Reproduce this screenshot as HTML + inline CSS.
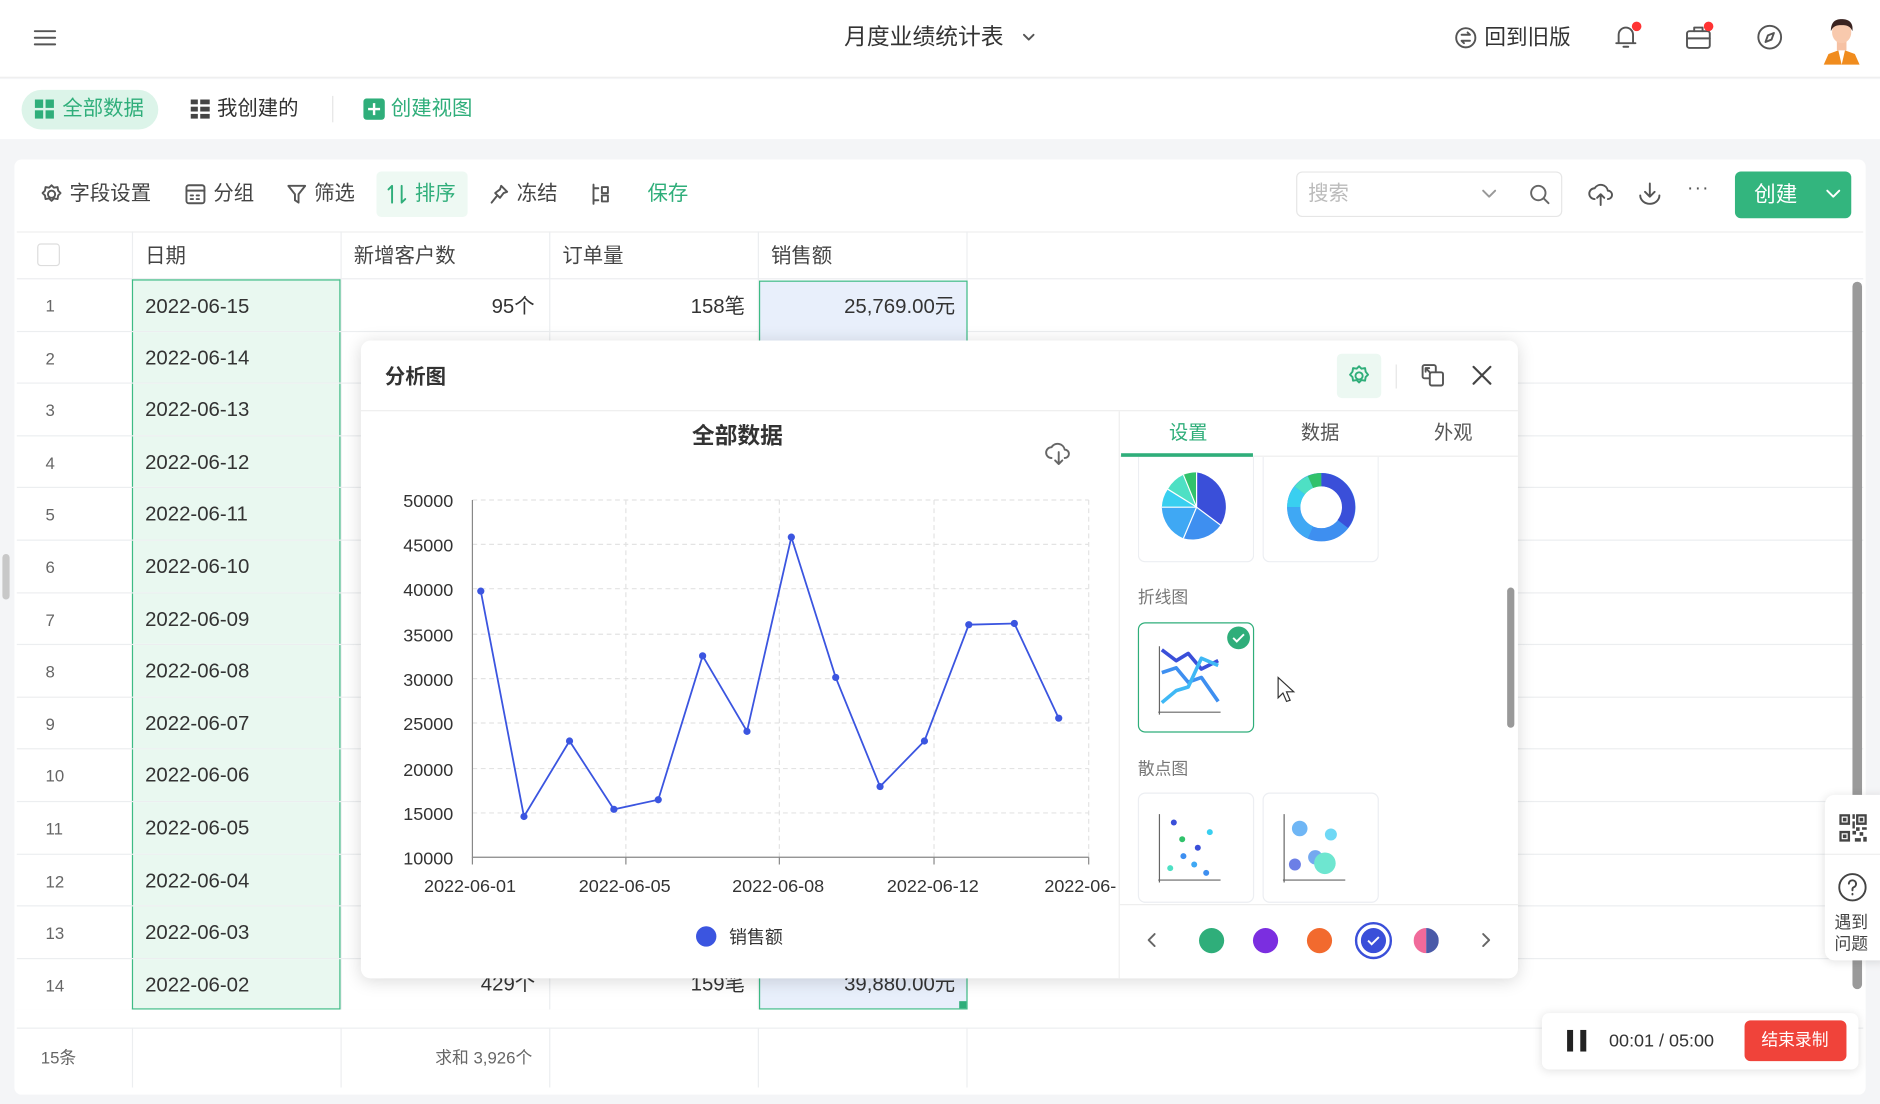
<!DOCTYPE html>
<html><head><meta charset="utf-8">
<style>
*{box-sizing:border-box;margin:0;padding:0}
html,body{width:1880px;height:1104px;overflow:hidden;background:#fff}
body{font-family:"Liberation Sans","Noto Sans CJK SC",sans-serif;color:#333}
#w{position:absolute;left:0;top:0;width:1568px;height:921px;transform:scale(1.199);transform-origin:0 0;background:#f4f5f7;overflow:hidden}
.a{position:absolute}
.t{position:absolute;white-space:nowrap;line-height:1}
.ic{position:absolute;fill:none;stroke:#555;stroke-width:1.6;stroke-linecap:round;stroke-linejoin:round}
.g{color:#2fae7a}
.row{position:absolute;left:0;width:1540px;height:43.6px;border-bottom:1px solid #eceef0}
.num{position:absolute;left:24px;width:30px;font-size:14px;color:#666;top:14px}
.dc{position:absolute;left:110px;width:174px;top:0;height:100%;background:#e9f8f0;border-left:1px solid #3dbb85;border-right:1px solid #3dbb85}
.dc span{position:absolute;left:10px;top:12px;font-size:17px;color:#333}
.card{position:absolute;width:97px;height:92px;border:1px solid #eceef2;border-radius:6px;background:#fff}
</style></head><body>
<div id="w">
<!-- header -->
<div class="a" style="left:0;top:0;width:1568px;height:65px;background:#fff;border-bottom:1px solid #eee"></div>
<svg class="ic" style="left:28px;top:24px" width="20" height="16"><path d="M1 2h17M1 7.5h17M1 13h17"/></svg>
<div class="t" style="left:704px;top:22px;font-size:19px;color:#333">月度业绩统计表</div>
<svg class="ic" style="left:852px;top:27px" width="12" height="10"><path d="M2 2l4 4 4-4"/></svg>
<svg class="ic" style="left:1213px;top:22px" width="19" height="19"><circle cx="9.5" cy="9.5" r="8"/><path d="M6 7h7l-2-2M13 12H6l2 2"/></svg>
<div class="t" style="left:1238px;top:22px;font-size:18px;color:#333">回到旧版</div>
<svg class="ic" style="left:1346px;top:19px" width="22" height="24"><path d="M4 17V10a6 6 0 0 1 12 0v7zM2 17h16M8 20h4"/></svg>
<div class="a" style="left:1361px;top:18px;width:8px;height:8px;border-radius:50%;background:#f33"></div>
<svg class="ic" style="left:1405px;top:20px" width="24" height="22"><rect x="2" y="6" width="19" height="14" rx="2"/><path d="M8 6V3h7v3M2 12h19"/></svg>
<div class="a" style="left:1421px;top:18px;width:8px;height:8px;border-radius:50%;background:#f33"></div>
<svg class="ic" style="left:1465px;top:20px" width="22" height="22"><circle cx="11" cy="11" r="9.5"/><path d="M14.5 7.5l-2 5.5-5 2 2-5.5z"/></svg>
<svg class="a" style="left:1519px;top:14px" width="34" height="40" viewBox="0 0 34 40"><path d="M2 40l4-9 11-4 11 4 4 9z" fill="#f08c1e"/><path d="M14 27h6l-3 13z" fill="#fff"/><rect x="13" y="20" width="8" height="8" fill="#f6c1a3"/><ellipse cx="17" cy="13" rx="8" ry="9" fill="#f8c9ad"/><path d="M8 12c0-8 4-10 9-10s10 2 9 10c-2-4-4-5-9-5s-7 1-9 5z" fill="#3a2320"/></svg>
<!-- tabs row -->
<div class="a" style="left:0;top:66px;width:1568px;height:50px;background:#fff"></div>
<div class="a" style="left:18px;top:75px;width:114px;height:33px;border-radius:17px;background:#dcf4e9"></div>
<svg class="a" style="left:29px;top:83px" width="16" height="16"><g fill="#2fae7a"><rect x="0" y="0" width="7" height="7"/><rect x="9" y="0" width="7" height="7"/><rect x="0" y="9" width="7" height="7"/><rect x="9" y="9" width="7" height="7"/></g></svg>
<div class="t g" style="left:52px;top:82px;font-size:17px">全部数据</div>
<svg class="a" style="left:159px;top:83px" width="16" height="16"><g fill="#444"><rect x="0" y="0" width="6" height="4"/><rect x="8" y="0" width="8" height="4"/><rect x="0" y="6" width="6" height="4"/><rect x="8" y="6" width="8" height="4"/><rect x="0" y="12" width="6" height="4"/><rect x="8" y="12" width="8" height="4"/></g></svg>
<div class="t" style="left:181px;top:82px;font-size:17px;color:#333">我创建的</div>
<div class="a" style="left:277px;top:80px;width:1px;height:22px;background:#e5e5e5"></div>
<svg class="a" style="left:303px;top:82px" width="18" height="18"><rect width="18" height="18" rx="3" fill="#2fae7a"/><path d="M9 4v10M4 9h10" stroke="#fff" stroke-width="2"/></svg>
<div class="t g" style="left:326px;top:82px;font-size:17px">创建视图</div>
<!-- main card -->
<div class="a" style="left:12px;top:133px;width:1544px;height:780px;background:#fff;border-radius:6px"></div>
<!-- toolbar -->
<svg class="ic" style="left:34px;top:153px" width="18" height="18"><circle cx="9" cy="9" r="3"/><path d="M9 1.5l2 2 3-.5.5 3 2 2-2 2-.5 3-3-.5-2 2-2-2-3 .5-.5-3-2-2 2-2 .5-3 3 .5z"/></svg>
<div class="t" style="left:58px;top:153px;font-size:17px;color:#444">字段设置</div>
<svg class="ic" style="left:154px;top:153px" width="18" height="18"><rect x="1.5" y="1.5" width="15" height="15" rx="2"/><path d="M1.5 6h15M5 10h2M10 10h2M5 13h2M10 13h2"/></svg>
<div class="t" style="left:178px;top:153px;font-size:17px;color:#444">分组</div>
<svg class="ic" style="left:239px;top:153px" width="17" height="18"><path d="M1.5 2h14l-5.5 7v7l-3-2V9z"/></svg>
<div class="t" style="left:262px;top:153px;font-size:17px;color:#444">筛选</div>
<div class="a" style="left:314px;top:143px;width:76px;height:38px;border-radius:4px;background:#eef9f3"></div>
<svg class="ic" style="left:322px;top:153px;stroke:#2fae7a" width="18" height="18"><path d="M5 16V2L2 5M13 2v14l3-3"/></svg>
<div class="t g" style="left:346px;top:153px;font-size:17px">排序</div>
<svg class="ic" style="left:408px;top:153px" width="17" height="18"><path d="M10 2l5 5-3 1-3 4-4-4 4-3zM6 11l-4 5"/></svg>
<div class="t" style="left:431px;top:153px;font-size:17px;color:#444">冻结</div>
<svg class="ic" style="left:493px;top:153px" width="16" height="18"><path d="M2 1v16M2 4h4M2 14h4M9 3h5v5H9zM9 10h5v5H9z"/></svg>
<div class="t g" style="left:540px;top:153px;font-size:17px">保存</div>
<div class="a" style="left:1081px;top:143px;width:222px;height:38px;border:1px solid #e6e6e6;border-radius:5px"></div>
<div class="t" style="left:1091px;top:153px;font-size:17px;color:#bbb">搜索</div>
<svg class="ic" style="left:1236px;top:157px;stroke:#999" width="12" height="10"><path d="M1 2l5 5 5-5"/></svg>
<svg class="ic" style="left:1275px;top:153px;stroke:#666" width="18" height="18"><circle cx="8" cy="8" r="6"/><path d="M12.5 12.5l4 4"/></svg>
<svg class="ic" style="left:1324px;top:151px" width="22" height="22"><path d="M6 15a4.5 4.5 0 0 1 0-9 6 6 0 0 1 11 2 3.5 3.5 0 0 1 0 7M11 20v-9l-3 3M11 11l3 3"/></svg>
<svg class="ic" style="left:1366px;top:151px" width="20" height="20"><path d="M10 2v11l-4-4M10 13l4-4M2 12a8 7 0 0 0 16 0"/></svg>
<div class="t" style="left:1407px;top:150px;font-size:16px;color:#555;letter-spacing:1px">···</div>
<div class="a" style="left:1447px;top:143px;width:97px;height:39px;border-radius:5px;background:#33b57e"></div>
<div class="t" style="left:1463px;top:153px;font-size:18px;color:#fff">创建</div>
<svg class="ic" style="left:1522px;top:157px;stroke:#fff" width="14" height="10"><path d="M2 2l5 5 5-5"/></svg>
<!-- table header -->
<div class="a" style="left:14px;top:193px;width:1540px;height:40px;border-top:1px solid #eee;border-bottom:1px solid #eceef0"></div>
<div class="a" style="left:31px;top:203px;width:19px;height:19px;border:1px solid #ddd;border-radius:3px"></div>
<div class="a" style="left:110px;top:193px;width:1px;height:714px;background:#eceef0"></div>
<div class="a" style="left:284px;top:193px;width:1px;height:714px;background:#eceef0"></div>
<div class="a" style="left:458px;top:193px;width:1px;height:714px;background:#eceef0"></div>
<div class="a" style="left:632px;top:193px;width:1px;height:714px;background:#eceef0"></div>
<div class="a" style="left:806px;top:193px;width:1px;height:714px;background:#eceef0"></div>
<div class="t" style="left:121px;top:205px;font-size:17px;color:#444">日期</div>
<div class="t" style="left:295px;top:205px;font-size:17px;color:#444">新增客户数</div>
<div class="t" style="left:469px;top:205px;font-size:17px;color:#444">订单量</div>
<div class="t" style="left:643px;top:205px;font-size:17px;color:#444">销售额</div>
<!-- rows -->
<div class="a" style="left:14px;top:233px">
<div class="row" style="top:0"><div class="num">1</div><div class="dc" style="border-top:1px solid #3dbb85;left:96px"><span>2022-06-15</span></div></div>
<div class="row" style="top:43.6px"><div class="num">2</div><div class="dc" style="left:96px"><span>2022-06-14</span></div></div>
<div class="row" style="top:87.2px"><div class="num">3</div><div class="dc" style="left:96px"><span>2022-06-13</span></div></div>
<div class="row" style="top:130.8px"><div class="num">4</div><div class="dc" style="left:96px"><span>2022-06-12</span></div></div>
<div class="row" style="top:174.4px"><div class="num">5</div><div class="dc" style="left:96px"><span>2022-06-11</span></div></div>
<div class="row" style="top:218px"><div class="num">6</div><div class="dc" style="left:96px"><span>2022-06-10</span></div></div>
<div class="row" style="top:261.6px"><div class="num">7</div><div class="dc" style="left:96px"><span>2022-06-09</span></div></div>
<div class="row" style="top:305.2px"><div class="num">8</div><div class="dc" style="left:96px"><span>2022-06-08</span></div></div>
<div class="row" style="top:348.8px"><div class="num">9</div><div class="dc" style="left:96px"><span>2022-06-07</span></div></div>
<div class="row" style="top:392.4px"><div class="num">10</div><div class="dc" style="left:96px"><span>2022-06-06</span></div></div>
<div class="row" style="top:436px"><div class="num">11</div><div class="dc" style="left:96px"><span>2022-06-05</span></div></div>
<div class="row" style="top:479.6px"><div class="num">12</div><div class="dc" style="left:96px"><span>2022-06-04</span></div></div>
<div class="row" style="top:523.2px"><div class="num">13</div><div class="dc" style="left:96px"><span>2022-06-03</span></div></div>
<div class="row" style="top:566.8px"><div class="num">14</div><div class="dc" style="left:96px;border-bottom:1px solid #3dbb85"><span>2022-06-02</span></div></div>
</div>
<div class="a" style="left:633px;top:234px;width:174px;height:608px;background:#e8effb;border:1px solid #3dbb85"></div>
<div class="t" style="left:410px;top:247px;font-size:17px">95个</div>
<div class="t" style="left:576px;top:247px;font-size:17px">158笔</div>
<div class="t" style="left:704px;top:247px;font-size:17px">25,769.00元</div>
<div class="t" style="left:401px;top:812px;font-size:17px">429个</div>
<div class="t" style="left:576px;top:812px;font-size:17px">159笔</div>
<div class="t" style="left:704px;top:812px;font-size:17px">39,880.00元</div>
<div class="a" style="left:800px;top:835px;width:6px;height:6px;background:#2fae7a"></div>
<div class="a" style="left:14px;top:857px;width:1540px;height:1px;background:#eceef0"></div>
<div class="a" style="left:14px;top:842px;width:1540px;height:15px;background:#fff"></div>
<div class="t" style="left:34px;top:875px;font-size:14px;color:#666">15条</div>
<div class="t" style="left:363px;top:875px;font-size:14px;color:#666">求和 3,926个</div>
<div class="a" style="left:1545px;top:235px;width:8px;height:590px;border-radius:4px;background:#9a9a9a"></div>
<div class="a" style="left:2px;top:462px;width:6px;height:38px;border-radius:3px;background:#c8c8c8"></div>
<!-- dialog -->
<div class="a" style="left:301px;top:284px;width:965px;height:532px;background:#fff;border-radius:8px;box-shadow:0 2px 14px rgba(0,0,0,.15);overflow:hidden">
 <div class="t" style="left:20px;top:22px;font-size:17px;font-weight:bold;color:#333">分析图</div>
 <div class="a" style="left:814px;top:11px;width:37px;height:37px;background:#ecf8f2;border-radius:4px"></div>
 <svg class="ic" style="left:823px;top:20px;stroke:#2fae7a" width="19" height="19"><circle cx="9.5" cy="9.5" r="3"/><path d="M9.5 1.5l2 2 3-.5.5 3 2 2.5-2 2-.5 3-3-.5-2 2-2-2-3 .5-.5-3-2-2 2-2.5.5-3 3 .5z"/></svg>
 <div class="a" style="left:863px;top:20px;width:1px;height:20px;background:#e5e5e5"></div>
 <svg class="ic" style="left:884px;top:19px" width="20" height="20"><rect x="1.5" y="1.5" width="11" height="11" rx="1.5"/><rect x="7.5" y="7.5" width="11" height="11" rx="1.5" fill="#fff"/><path d="M4 4l4 4M4 4v3M4 4h3"/></svg>
 <svg class="ic" style="left:926px;top:20px;stroke:#444;stroke-width:1.8" width="18" height="18"><path d="M2 2l14 14M16 2L2 16"/></svg>
 <div class="a" style="left:0;top:58px;width:965px;height:1px;background:#eee"></div>
 <div class="a" style="left:632px;top:59px;width:1px;height:473px;background:#eee"></div>
 <div class="t" style="left:276px;top:71px;font-size:19px;font-weight:bold;color:#333">全部数据</div>
 <svg class="ic" style="left:570px;top:83px;stroke:#666" width="24" height="22"><path d="M6 15a4.5 4.5 0 0 1 0-9 6 6 0 0 1 11 2 3.5 3.5 0 0 1 0 7M12 10v10l-3-3M12 20l3-3"/></svg>
 <!-- chart -->
 <svg class="a" style="left:0;top:0" width="632" height="532" font-family="Liberation Sans, sans-serif" font-size="15" fill="#333">
  <g stroke="#e3e3e3" stroke-dasharray="4 3">
   <path d="M93 133H607M93 170H607M93 207H607M93 245H607M93 282H607M93 319H607M93 357H607M93 394H607"/>
   <path d="M221 133V431M349 133V431M478 133V431M607 133V431"/>
  </g>
  <path d="M93 133V431H607" stroke="#888" fill="none"/>
  <path d="M93 431v6M221 431v6M349 431v6M478 431v6M607 431v6" stroke="#888"/>
  <g text-anchor="end"><text x="77" y="139">50000</text><text x="77" y="176">45000</text><text x="77" y="213">40000</text><text x="77" y="251">35000</text><text x="77" y="288">30000</text><text x="77" y="325">25000</text><text x="77" y="363">20000</text><text x="77" y="400">15000</text><text x="77" y="437">10000</text></g>
  <g text-anchor="middle"><text x="91" y="460">2022-06-01</text><text x="220" y="460">2022-06-05</text><text x="348" y="460">2022-06-08</text><text x="477" y="460">2022-06-12</text><text x="600" y="460">2022-06-</text></g>
  <polyline fill="none" stroke="#3b55e0" stroke-width="1.5" points="100,209 136,397 174,334 211,391 248,383 285,263 322,326 359,164 396,281 433,372 470,334 507,237 545,236 582,315"/>
  <g fill="#3b55e0"><circle cx="100" cy="209" r="3"/><circle cx="136" cy="397" r="3"/><circle cx="174" cy="334" r="3"/><circle cx="211" cy="391" r="3"/><circle cx="248" cy="383" r="3"/><circle cx="285" cy="263" r="3"/><circle cx="322" cy="326" r="3"/><circle cx="359" cy="164" r="3"/><circle cx="396" cy="281" r="3"/><circle cx="433" cy="372" r="3"/><circle cx="470" cy="334" r="3"/><circle cx="507" cy="237" r="3"/><circle cx="545" cy="236" r="3"/><circle cx="582" cy="315" r="3"/>
  <circle cx="288" cy="497" r="8.5"/></g>
  <text x="307" y="503" font-family="Liberation Sans, Noto Sans CJK SC, sans-serif">销售额</text>
 </svg>
 <!-- right panel -->
 <div class="card" style="left:648px;top:97px;height:88px;border-top:none;border-radius:0 0 6px 6px"></div>
 <div class="card" style="left:752px;top:97px;height:88px;border-top:none;border-radius:0 0 6px 6px"></div>
 <div class="t g" style="left:674px;top:70px;font-size:16px">设置</div>
 <div class="t" style="left:784px;top:70px;font-size:16px;color:#555">数据</div>
 <div class="t" style="left:895px;top:70px;font-size:16px;color:#555">外观</div>
 <div class="a" style="left:633px;top:96px;width:332px;height:1px;background:#eee"></div>
 <div class="a" style="left:634px;top:94px;width:110px;height:3px;background:#2fae7a"></div>
 <svg class="a" style="left:667px;top:109px" width="60" height="60" viewBox="-30 -30 60 60"><path d="M0 0V-29A29 29 0 0 1 20 15Z" fill="#3a4fd9"/><path d="M0 0L20 15A29 29 0 0 1-11 26Z" fill="#3e8ff0"/><path d="M0 0L-11 26A29 29 0 0 1-29 0Z" fill="#3fa8f4"/><path d="M0 0H-29A29 29 0 0 1-24-15Z" fill="#39cff0"/><path d="M0 0L-24-15A29 29 0 0 1-11-27Z" fill="#4ee0c4"/><path d="M0 0L-11-27A29 29 0 0 1 0-29Z" fill="#31c26b"/><g stroke="#fff" stroke-width="1"><path d="M0 0V-29M0 0L20 15M0 0L-11 26M0 0H-29M0 0L-24-15M0 0L-11-27"/></g></svg>
 <svg class="a" style="left:771px;top:109px" width="60" height="60" viewBox="-30 -30 60 60" fill="none" stroke-width="11"><circle r="23" stroke="#3e8ff0"/><path d="M0-23A23 23 0 0 1 18 14" stroke="#3a4fd9"/><path d="M-23 0A23 23 0 0 1-18-14" stroke="#39cff0"/><path d="M-18-14A23 23 0 0 1-9-21" stroke="#4ee0c4"/><path d="M-9-21A23 23 0 0 1 0-23" stroke="#31c26b"/><path d="M-23 0A23 23 0 0 0-9 21" stroke="#3fa8f4"/></svg>
 <div class="t" style="left:648px;top:207px;font-size:14px;color:#777">折线图</div>
 <div class="card" style="left:648px;top:235px;border:1px solid #2fae7a"></div>
 <svg class="a" style="left:722px;top:238px" width="20" height="20"><circle cx="10" cy="10" r="9.5" fill="#2fae7a"/><path d="M5.5 10l3 3 6-6" stroke="#fff" stroke-width="1.6" fill="none"/></svg>
 <svg class="a" style="left:663px;top:252px" width="62" height="62" fill="none" stroke-linejoin="round"><path d="M3 3V60M2 58H54" stroke="#666" stroke-width="1"/><path d="M5 6l12 9 10-6 11 13 14-7" stroke="#3a4fd9" stroke-width="3"/><path d="M5 25l12-4 10 12 11-4 14 20" stroke="#3e8ff0" stroke-width="3"/><path d="M5 50l12-10 10-3 11-24 14 6" stroke="#3fb8f5" stroke-width="3"/></svg>
 <svg class="a" style="left:764px;top:280px" width="18" height="24"><path d="M1 1v17l4-4 3 7 3-1-3-7h6z" fill="#fff" stroke="#333" stroke-width="1"/></svg>
 <div class="t" style="left:648px;top:350px;font-size:14px;color:#777">散点图</div>
 <div class="card" style="left:648px;top:377px"></div>
 <div class="card" style="left:752px;top:377px"></div>
 <svg class="a" style="left:663px;top:392px" width="62" height="62"><path d="M3 3V60M2 58H54" stroke="#666" stroke-width="1"/><g><circle cx="15" cy="10" r="2.5" fill="#3a4fd9"/><circle cx="22" cy="24" r="2.5" fill="#31c26b"/><circle cx="45" cy="18" r="2.5" fill="#39cff0"/><circle cx="35" cy="31" r="2.5" fill="#3a4fd9"/><circle cx="23" cy="38" r="2.5" fill="#3e8ff0"/><circle cx="12" cy="48" r="2.5" fill="#4ee0c4"/><circle cx="32" cy="45" r="2.5" fill="#3fa8f4"/><circle cx="42" cy="52" r="2.5" fill="#3e8ff0"/></g></svg>
 <svg class="a" style="left:767px;top:392px" width="62" height="62"><path d="M3 3V60M2 58H54" stroke="#666" stroke-width="1"/><circle cx="16" cy="15" r="6.5" fill="#6fb6f5"/><circle cx="42" cy="20" r="5" fill="#6fd8f5"/><circle cx="12" cy="45" r="5" fill="#6c7fe6"/><circle cx="29" cy="39" r="6" fill="#74a9f0"/><circle cx="37" cy="44" r="9" fill="#6ee6d0"/></svg>
 <div class="a" style="left:633px;top:470px;width:332px;height:62px;background:#fff;border-top:1px solid #eee"></div>
 <svg class="ic" style="left:655px;top:493px;stroke:#666" width="10" height="14"><path d="M7 2L2 7l5 5"/></svg>
 <svg class="ic" style="left:933px;top:493px;stroke:#666" width="10" height="14"><path d="M3 2l5 5-5 5"/></svg>
 <div class="a" style="left:699px;top:490px;width:21px;height:21px;border-radius:50%;background:#2fae7a"></div>
 <div class="a" style="left:744px;top:490px;width:21px;height:21px;border-radius:50%;background:#7b2ee0"></div>
 <div class="a" style="left:789px;top:490px;width:21px;height:21px;border-radius:50%;background:#f26a2e"></div>
 <div class="a" style="left:829px;top:485px;width:31px;height:31px;border-radius:50%;border:2px solid #3a4fd9"></div>
 <svg class="a" style="left:834px;top:490px" width="21" height="21"><circle cx="10.5" cy="10.5" r="10.5" fill="#3a4fd9"/><path d="M6 10.5l3 3 6-6" stroke="#fff" stroke-width="1.6" fill="none"/></svg>
 <svg class="a" style="left:878px;top:490px" width="21" height="21"><path d="M10.5 0A10.5 10.5 0 0 0 10.5 21z" fill="#f06a9a"/><path d="M10.5 0A10.5 10.5 0 0 1 10.5 21z" fill="#4a5aa8"/></svg>
 <div class="a" style="left:956px;top:206px;width:6px;height:117px;border-radius:3px;background:#999"></div>
</div>
<!-- right widget -->
<div class="a" style="left:1522px;top:663px;width:50px;height:138px;background:#fff;border-radius:8px 0 0 8px;box-shadow:0 1px 8px rgba(0,0,0,.12)"></div>
<svg class="a" style="left:1534px;top:679px" width="23" height="23" fill="#444"><path d="M0 0h9v9H0zM2 2v5h5V2zM14 0h9v9h-9zM16 2v5h5V2zM0 14h9v9H0zM2 16v5h5v-5zM3 3h3v3H3zM17 3h3v3h-3zM3 17h3v3H3zM11 0h2v4h-2zM11 6h2v6h-2zM14 11h3v3h-3zM19 11h4v2h-4zM11 14h3v3h-3zM17 15h3v3h-3zM20 19h3v4h-3zM13 20h5v3h-5z"/></svg>
<div class="a" style="left:1522px;top:712px;width:46px;height:1px;background:#eee"></div>
<svg class="ic" style="left:1533px;top:728px;stroke:#444" width="24" height="24"><circle cx="12" cy="12" r="11"/><path d="M9 9a3 3 0 1 1 4 3c-1 .5-1 1-1 2.5M12 17.5v.5"/></svg>
<div class="t" style="left:1530px;top:760px;font-size:14px;color:#444;line-height:18px;white-space:normal;width:32px">遇到问题</div>
<!-- recording -->
<div class="a" style="left:1286px;top:845px;width:264px;height:47px;background:#fff;border-radius:6px;box-shadow:0 1px 8px rgba(0,0,0,.12)"></div>
<div class="a" style="left:1307px;top:859px;width:5px;height:18px;background:#222"></div>
<div class="a" style="left:1318px;top:859px;width:5px;height:18px;background:#222"></div>
<div class="t" style="left:1342px;top:861px;font-size:15px;color:#333">00:01 / 05:00</div>
<div class="a" style="left:1455px;top:851px;width:85px;height:34px;border-radius:5px;background:#f0433a"></div>
<div class="t" style="left:1469px;top:860px;font-size:14px;color:#fff">结束录制</div>
</div>
</body></html>
